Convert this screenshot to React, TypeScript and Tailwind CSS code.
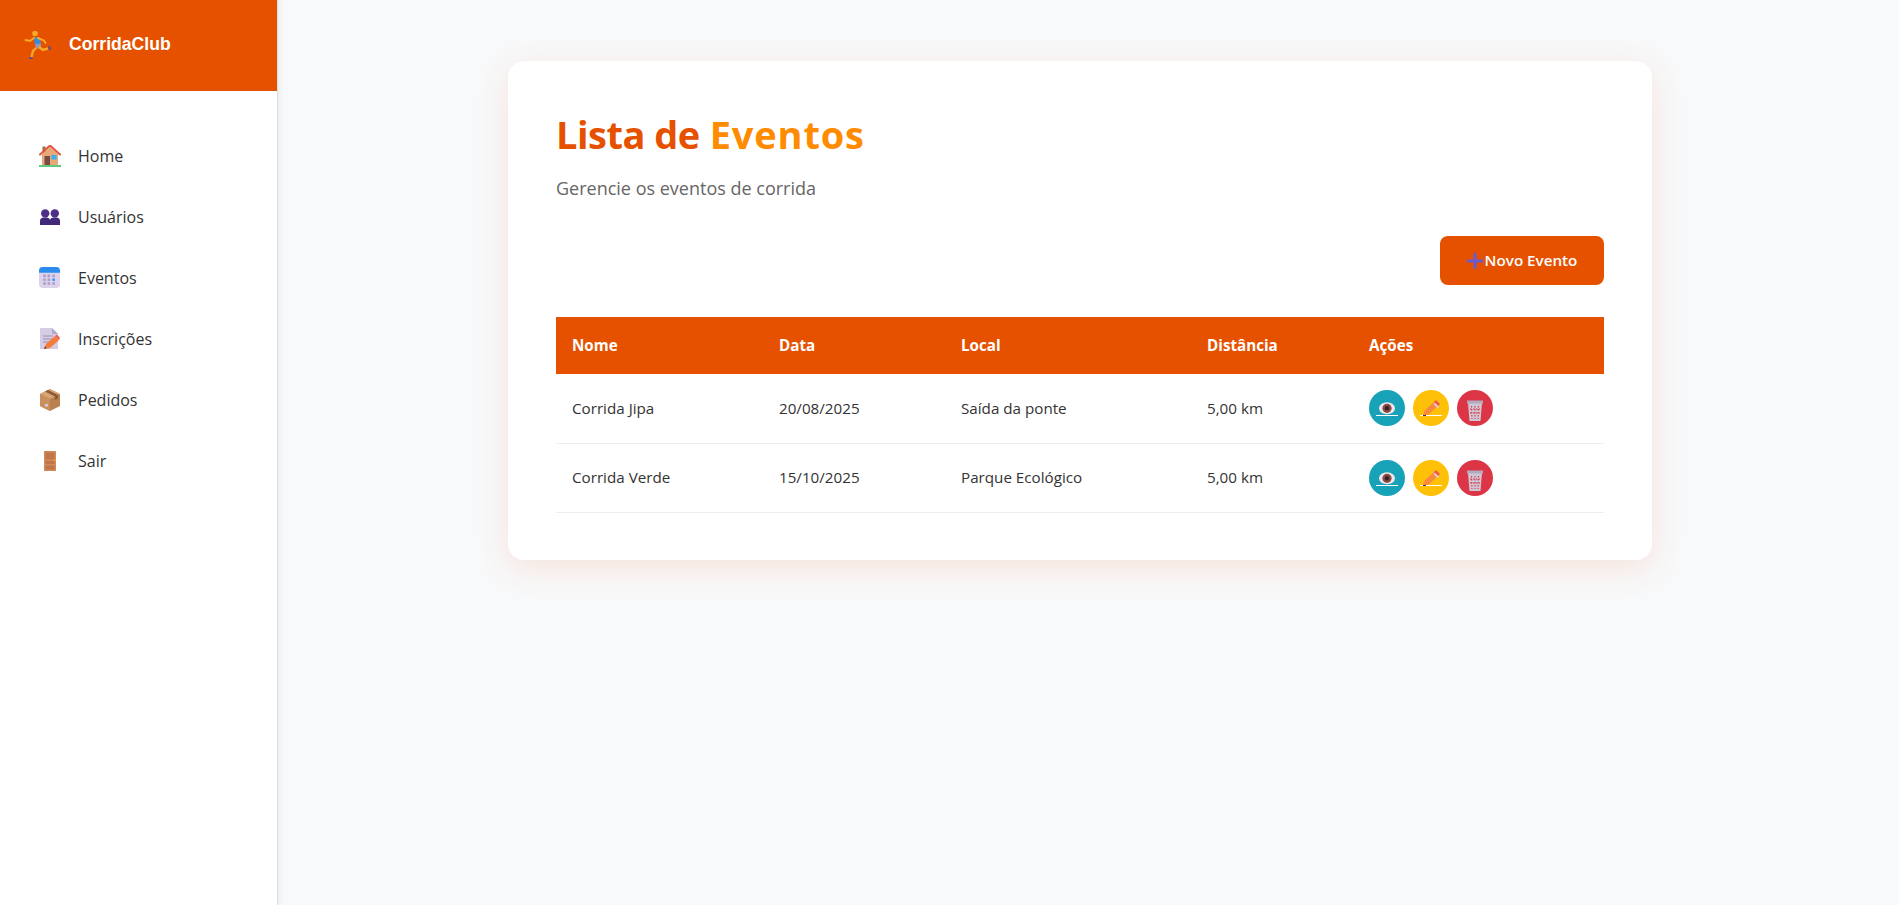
import React from 'react';

const RunnerIcon = () => (
  <svg width="28" height="30" viewBox="0 0 28 30">
    <circle cx="11" cy="3.5" r="2.8" fill="#f9a825" />
    <path d="M10 7 L15 7.5 L17 14 L11 15 Z" fill="#2f8fe8" />
    <path d="M14 8 L20 10.5 L21.5 13" stroke="#f9a825" strokeWidth="2" fill="none" strokeLinecap="round" />
    <path d="M10 8 L6 11 L1.5 10" stroke="#f9a825" strokeWidth="2" fill="none" strokeLinecap="round" />
    <path d="M11 14 L17 13.5 L17 18 L12 19 Z" fill="#9c97a8" />
    <path d="M12 18 L9 21 L7.5 27" stroke="#f9a825" strokeWidth="2.4" fill="none" />
    <path d="M15 17 L19 20 L24 18.5" stroke="#f9a825" strokeWidth="2.4" fill="none" />
    <path d="M5 27 L9 27.5 L8.5 29 L5.5 29 Z" fill="#5c4a96" />
    <path d="M24 16.5 L26 16 L27 20 L25 20 Z" fill="#5c4a96" />
  </svg>
);

const HouseIcon = () => (
  <svg width="22" height="22" viewBox="0 0 22 22">
    <rect x="3.5" y="1.5" width="3" height="6" fill="#a1694b" />
    <path d="M3 9 L11 2 L19 9 V20 H3 Z" fill="#e8a979" />
    <path d="M1 9.5 L11 0.5 L21 9.5" stroke="#e2553f" strokeWidth="2" fill="none" strokeLinecap="round" />
    <rect x="5.5" y="11" width="5.5" height="9" fill="#7a4a42" />
    <rect x="12.5" y="10" width="5" height="4.5" fill="#35b0f0" />
    <rect x="0" y="20" width="22" height="2" fill="#63c77c" />
  </svg>
);

const PeopleIcon = () => (
  <svg width="20" height="16" viewBox="0 0 20 16">
    <circle cx="5.2" cy="4.4" r="4.2" fill="#4f2f87" />
    <circle cx="14.8" cy="4.4" r="4.2" fill="#4f2f87" />
    <path d="M0 16 V12 Q0 8.5 4 8.5 H6.5 Q9.5 8.5 10 11 Q10.5 8.5 13.5 8.5 H16 Q20 8.5 20 12 V16 Z" fill="#43287a" />
  </svg>
);

const CalendarIcon = () => (
  <svg width="21" height="21" viewBox="0 0 22 22">
    <rect x="0" y="0" width="22" height="22" rx="4" fill="#dcd2ec" />
    <path d="M0 6 V4 Q0 0 4 0 H18 Q22 0 22 4 V6 Z" fill="#2b8cf0" />
    {[9, 13, 17].map((y) =>
      [5.5, 10, 15].map((x) => (
        <rect key={`${x}-${y}`} x={x - 1} y={y - 1} width="2.6" height="2.6" fill={x === 15 && y === 13 ? '#2f9cf4' : '#a99bc6'} />
      )),
    )}
  </svg>
);

const NoteIcon = () => (
  <svg width="20" height="22" viewBox="0 0 20 22">
    <path d="M0 0 H12 L18 6 V21 H0 Z" fill="#d5cde6" />
    <path d="M12 0 L18 6 H12 Z" fill="#b3a8c9" />
    <path d="M3 8 H13 M3 11 H13 M3 14 H9" stroke="#9b90ad" strokeWidth="1" />
    <path d="M4 21 L6 16 L15 8 L19 12 L10 20 Z" fill="#f57c3a" />
    <path d="M15 8 L17 6.5 L20 10 L19 12 Z" fill="#ef5b4f" />
    <path d="M4 21 L5 18.5 L6.5 20 Z" fill="#3b3340" />
  </svg>
);

const BoxIcon = () => (
  <svg width="20" height="22" viewBox="0 0 20 22">
    <path d="M10 0 L20 5 V17 L10 22 L0 17 V5 Z" fill="#b9814f" />
    <path d="M10 0 L20 5 L10 10 L0 5 Z" fill="#d7a672" />
    <path d="M0 5 L10 10 V22 L0 17 Z" fill="#c98f5c" />
    <path d="M5 2.5 L15 7.5 V11 L18 9.5 V6 L8 1 Z" fill="#8a5a38" />
    <rect x="5" y="15" width="3" height="2.5" fill="#d5cde6" />
  </svg>
);

const DoorIcon = () => (
  <svg width="12" height="20" viewBox="0 0 12 20">
    <rect width="12" height="20" fill="#d38a5a" />
    <rect x="1.5" y="1.5" width="9" height="7" fill="#bf7648" />
    <rect x="1.5" y="10" width="9" height="3" fill="#bf7648" />
    <rect x="1.5" y="14.5" width="9" height="4" fill="#bf7648" />
    <rect x="9.5" y="8.5" width="2" height="1" fill="#f9a825" />
  </svg>
);

const EyeIcon = () => (
  <svg width="22" height="22" viewBox="0 0 22 22">
    <ellipse cx="11" cy="11.3" rx="8" ry="6" fill="#ece6ee" />
    <circle cx="11" cy="11.3" r="4.6" fill="#8a4a3e" />
    <circle cx="11" cy="11.3" r="2.2" fill="#33212e" />
    <rect x="0" y="18" width="22" height="1" fill="#ffffff" />
  </svg>
);

const PencilIcon = () => (
  <svg width="22" height="22" viewBox="0 0 22 22">
    <path d="M3 18 L5 13 L14 5 L18 9 L8 18 Z" fill="#f98a3c" />
    <path d="M14 5 L16 3 L20 7 L18 9 Z" fill="#f2574f" />
    <path d="M15 6 L19 10 L17.5 11 L13.5 7 Z" fill="#e6cfe0" />
    <rect x="0" y="18" width="22" height="1" fill="#ffffff" />
    <rect x="3" y="18" width="3" height="1" fill="#3b3340" />
  </svg>
);

const TrashIcon = () => (
  <svg width="16" height="21" viewBox="0 0 16 21">
    <path d="M1 3 H15 L13.5 21 H2.5 Z" fill="#cfc6d6" />
    <rect x="0" y="0.5" width="16" height="3" fill="#b3abbd" />
    <path d="M4.5 6 L5 19 M8 6 V19 M11.5 6 L11 19 M3 9 H13 M3 13 H13" stroke="#dc3545" strokeWidth="1.1" strokeDasharray="1.5 1.5" />
  </svg>
);

const PlusIcon = () => (
  <svg width="16" height="16" viewBox="0 0 16 16">
    <path d="M6.5 0 H9.5 V6.5 H16 V9.5 H9.5 V16 H6.5 V9.5 H0 V6.5 H6.5 Z" fill="#6a5acd" />
  </svg>
);

const menu = [
  { label: 'Home', icon: <HouseIcon /> },
  { label: 'Usuários', icon: <PeopleIcon /> },
  { label: 'Eventos', icon: <CalendarIcon /> },
  { label: 'Inscrições', icon: <NoteIcon /> },
  { label: 'Pedidos', icon: <BoxIcon /> },
  { label: 'Sair', icon: <DoorIcon /> },
];

const eventos = [
  { nome: 'Corrida Jipa', data: '20/08/2025', local: 'Saída da ponte', distancia: '5,00 km' },
  { nome: 'Corrida Verde', data: '15/10/2025', local: 'Parque Ecológico', distancia: '5,00 km' },
];

export default function App() {
  return (
    <div className="flex min-h-[905px] bg-[#f8f9fa] font-['Open_Sans',sans-serif]">
      <aside className="w-[278px] shrink-0 bg-white border-r border-[#e0e0e0] shadow-[2px_0_5px_rgba(0,0,0,0.05)]">
        <div className="flex h-[91px] items-center bg-[#e65100] pb-[2px] pl-6">
          <RunnerIcon />
          <span className="ml-[17px] font-['Liberation_Sans',sans-serif] text-[17.6px] font-bold text-white">CorridaClub</span>
        </div>
        <nav className="pt-[34px]">
          {menu.map((item) => (
            <a key={item.label} className="flex h-[61px] items-center text-[16px] text-[#333]">
              <span className="flex w-[78px] justify-center pl-[25px] pr-1">{item.icon}</span>
              {item.label}
            </a>
          ))}
        </nav>
      </aside>

      <main className="flex-1 pl-[230px] pt-[61px]">
        <div className="w-[1144px] rounded-2xl bg-white p-12 pb-[47px] shadow-[0_8px_32px_rgba(230,81,0,0.13)]">
          <h1 className="text-[38px] font-bold leading-[50px] text-[#e65100]">
            <span className="tracking-[-0.5px]">Lista de</span>{' '}
            <span className="tracking-[0.85px] text-[#ff8c00]">Eventos</span>
          </h1>
          <p className="mt-[17px] text-[18px] leading-6 text-[#666]">Gerencie os eventos de corrida</p>

          <div className="mt-[36px] flex justify-end">
            <button className="flex h-[49px] w-[164px] items-center justify-center gap-[2px] rounded-lg bg-[#e65100] text-[15.2px] font-semibold text-white">
              <PlusIcon />
              Novo Evento
            </button>
          </div>

          <table className="mt-8 w-full table-fixed border-collapse text-left text-[15.2px] text-[#333]">
            <thead>
              <tr className="h-[57px] bg-[#e65100] text-white">
                <th className="w-[207px] pl-4 font-bold">Nome</th>
                <th className="w-[182px] pl-4 font-bold">Data</th>
                <th className="w-[246px] pl-4 font-bold">Local</th>
                <th className="w-[162px] pl-4 font-bold">Distância</th>
                <th className="pl-4 font-bold">Ações</th>
              </tr>
            </thead>
            <tbody>
              {eventos.map((ev) => (
                <tr key={ev.nome} className="h-[69px] border-b border-[#eee]">
                  <td className="pl-4">{ev.nome}</td>
                  <td className="pl-4">{ev.data}</td>
                  <td className="pl-4">{ev.local}</td>
                  <td className="pl-4">{ev.distancia}</td>
                  <td className="pl-4">
                    <div className="flex gap-2">
                      <a className="flex h-9 w-9 items-center justify-center rounded-full bg-[#17a2b8]"><EyeIcon /></a>
                      <a className="flex h-9 w-9 items-center justify-center rounded-full bg-[#ffc107]"><PencilIcon /></a>
                      <button className="flex h-9 w-9 items-center justify-center rounded-full bg-[#dc3545] pt-[5px]"><TrashIcon /></button>
                    </div>
                  </td>
                </tr>
              ))}
            </tbody>
          </table>
        </div>
      </main>
    </div>
  );
}
